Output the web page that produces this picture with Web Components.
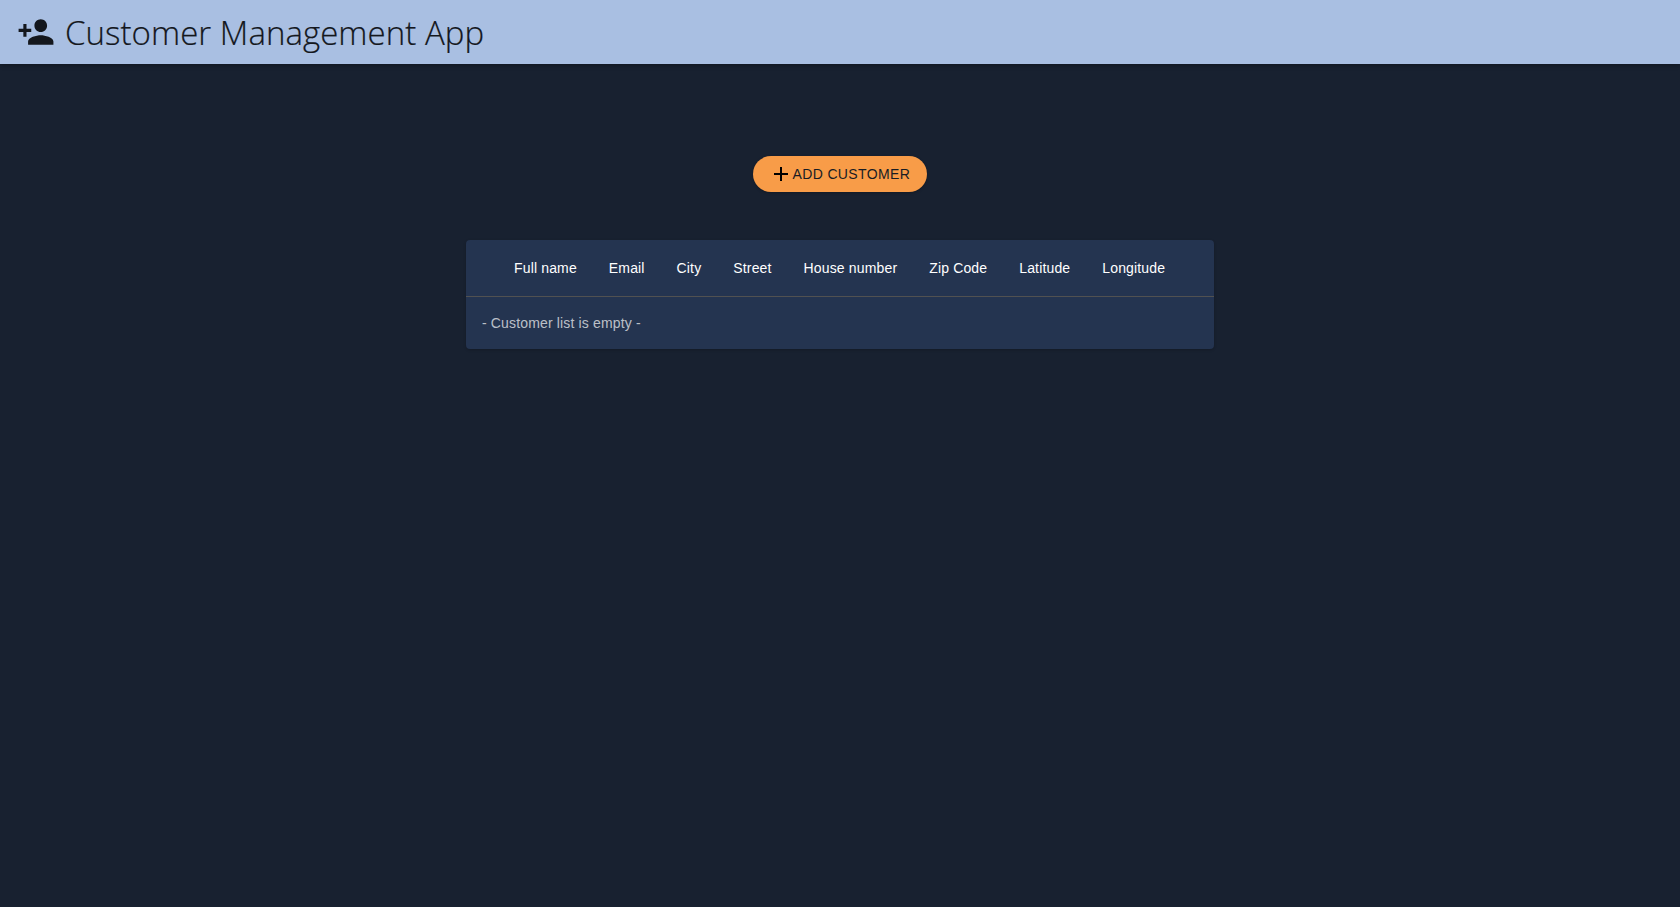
<!DOCTYPE html>
<html lang="en"><head><meta charset="utf-8"><title>Customer Management App</title>
<style>
html,body{margin:0;padding:0;height:100%;background:#182130}
body{font-family:"Liberation Sans",Arial,sans-serif}
</style></head><body>
<app-shell></app-shell>
<script>
class AppBar extends HTMLElement{constructor(){super();this.attachShadow({mode:'open'}).innerHTML=`<style>
:host{display:flex;align-items:center;height:64px;box-sizing:border-box;padding:0 17px;background:#a9bfe2;color:#14171d;box-shadow:0 2px 4px rgba(0,0,0,.25);position:relative}
svg{width:38px;height:38px;fill:#14171d;flex:none}
h1{margin:0 0 0 10px;font:300 33px/1 "Open Sans",sans-serif;letter-spacing:.05px;-webkit-text-stroke:.2px #14171d}
</style><svg viewBox="0 0 24 24"><path d="M15 12c2.21 0 4-1.79 4-4s-1.79-4-4-4-4 1.79-4 4 1.79 4 4 4zm-9-2V7H4v3H1v2h3v3h2v-3h3v-2H6zm9 4c-2.67 0-8 1.34-8 4v2h16v-2c0-2.66-5.33-4-8-4z"/></svg><h1><slot></slot></h1>`}}
class AddButton extends HTMLElement{constructor(){super();this.attachShadow({mode:'open'}).innerHTML=`<style>
:host{display:inline-flex;align-items:center;width:174px;height:36px;box-sizing:border-box;padding:0 15px 0 16px;background:#f89c48;color:#181c24;border-radius:18px;font:500 14px/1 "Liberation Sans",Arial,sans-serif;letter-spacing:.36px;text-transform:uppercase;white-space:nowrap;box-shadow:0 1px 3px rgba(0,0,0,.25)}
svg{width:24px;height:24px;fill:#000;flex:none;margin-right:-.5px}
</style><svg viewBox="0 0 24 24"><path d="M19 13h-6v6h-2v-6H5v-2h6V5h2v6h6v2z"/></svg><slot></slot>`}}
class CustomerTable extends HTMLElement{constructor(){super();const cols=['Full name','Email','City','Street','House number','Zip Code','Latitude','Longitude'];this.attachShadow({mode:'open'}).innerHTML=`<style>
:host{display:block;width:748px;background:#243450;border-radius:4px;font:14px/20px "Liberation Sans",Arial,sans-serif;letter-spacing:.15px;box-shadow:0 1px 3px rgba(0,0,0,.2)}
.head{display:flex;align-items:center;height:56px;padding:0 32px;border-bottom:1px solid #515151;color:#fff}
.head span{padding:0 16px;white-space:nowrap;font-weight:400}
.empty{height:52px;display:flex;align-items:center;padding:0 16px;color:rgba(255,255,255,.7)}
</style><div class="head">${cols.map(c=>`<span>${c}</span>`).join('')}</div><div class="empty"><slot></slot></div>`}}
class AppShell extends HTMLElement{constructor(){super();this.attachShadow({mode:'open'}).innerHTML=`<style>
:host{display:block;min-height:907px;background:#182130}
main{display:flex;flex-direction:column;align-items:center;padding-top:92px;gap:48px}
</style><app-bar>Customer Management App</app-bar><main><add-button>Add customer</add-button><customer-table>- Customer list is empty -</customer-table></main>`}}
customElements.define('app-bar',AppBar);customElements.define('add-button',AddButton);customElements.define('customer-table',CustomerTable);customElements.define('app-shell',AppShell);
</script></body></html>
